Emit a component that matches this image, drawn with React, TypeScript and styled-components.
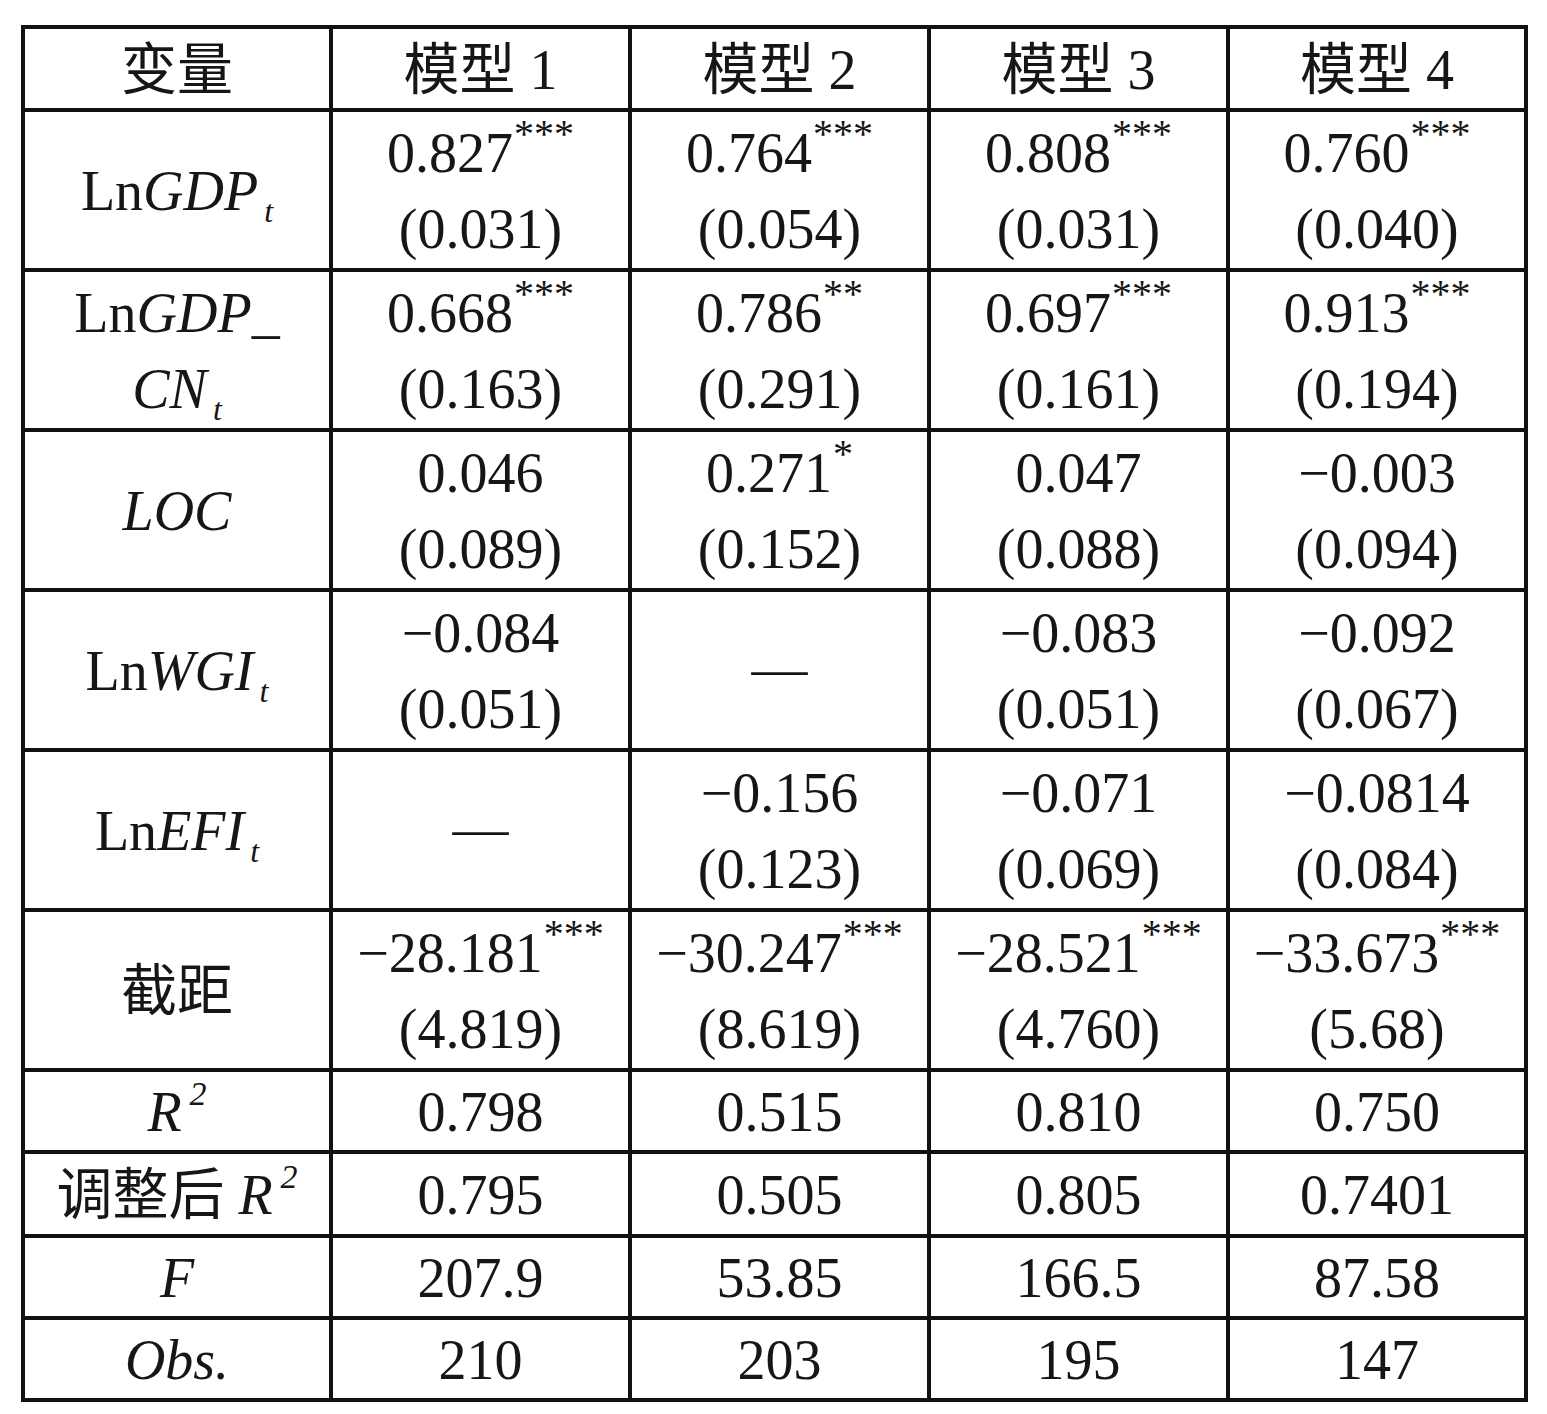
import React from 'react';
import styled, { createGlobalStyle } from 'styled-components';

const Global = createGlobalStyle`
    html, body {
        margin: 0;
        padding: 0;
        background: #ffffff;
    }
`;

const Page = styled.div`
    padding: 25px 0 0 21px;
    font-family: "Liberation Serif", "Noto Sans CJK SC", serif;
    color: #161616;
`;

const Table = styled.table`
    border-collapse: collapse;
    table-layout: fixed;
    width: 1507px;
    font-size: 56px;
    line-height: 76px;
`;

const Row = styled.tr<{ $h: number }>`
    height: ${props => props.$h}px;
`;

const Cell = styled.td`
    border: 4px solid #111111;
    padding: 2px 0 0 0;
    text-align: center;
    vertical-align: middle;
    white-space: nowrap;
`;

const Line = styled.div`
    display: block;
`;

const Cjk = styled.span`
    font-family: "Noto Sans CJK SC", sans-serif;
    font-weight: 400;
    line-height: 1;
`;

const It = styled.i`
    font-style: italic;
`;

const Stars = styled.span`
    font-size: 40px;
    line-height: 0;
    vertical-align: 25px;
    margin-left: 1px;
`;

const Sub = styled.i`
    font-size: 32px;
    line-height: 0;
    vertical-align: -12px;
    margin-left: 6px;
`;

const Sup = styled.i`
    font-size: 34px;
    line-height: 0;
    vertical-align: 26px;
    margin-left: 8px;
`;

const Dash = styled.span`
    vertical-align: 6px;
`;

type Val = { v: string; s?: string; e?: string };
type Entry = Val | null;

interface DataRow {
    label: React.ReactNode;
    cells: Entry[];
    h: number;
}

const tall = 160;
const short = 82;

const rows: DataRow[] = [
    {
        label: <Line>Ln<It>GDP</It><Sub>t</Sub></Line>,
        h: tall,
        cells: [
            { v: '0.827', s: '***', e: '(0.031)' },
            { v: '0.764', s: '***', e: '(0.054)' },
            { v: '0.808', s: '***', e: '(0.031)' },
            { v: '0.760', s: '***', e: '(0.040)' },
        ],
    },
    {
        label: (
            <>
                <Line>Ln<It>GDP</It>_</Line>
                <Line><It>CN</It><Sub>t</Sub></Line>
            </>
        ),
        h: tall,
        cells: [
            { v: '0.668', s: '***', e: '(0.163)' },
            { v: '0.786', s: '**', e: '(0.291)' },
            { v: '0.697', s: '***', e: '(0.161)' },
            { v: '0.913', s: '***', e: '(0.194)' },
        ],
    },
    {
        label: <Line><It>LOC</It></Line>,
        h: tall,
        cells: [
            { v: '0.046', e: '(0.089)' },
            { v: '0.271', s: '*', e: '(0.152)' },
            { v: '0.047', e: '(0.088)' },
            { v: '\u22120.003', e: '(0.094)' },
        ],
    },
    {
        label: <Line>Ln<It>WGI</It><Sub>t</Sub></Line>,
        h: tall,
        cells: [
            { v: '\u22120.084', e: '(0.051)' },
            null,
            { v: '\u22120.083', e: '(0.051)' },
            { v: '\u22120.092', e: '(0.067)' },
        ],
    },
    {
        label: <Line>Ln<It>EFI</It><Sub>t</Sub></Line>,
        h: tall,
        cells: [
            null,
            { v: '\u22120.156', e: '(0.123)' },
            { v: '\u22120.071', e: '(0.069)' },
            { v: '\u22120.0814', e: '(0.084)' },
        ],
    },
    {
        label: <Line><Cjk>截距</Cjk></Line>,
        h: tall,
        cells: [
            { v: '\u221228.181', s: '***', e: '(4.819)' },
            { v: '\u221230.247', s: '***', e: '(8.619)' },
            { v: '\u221228.521', s: '***', e: '(4.760)' },
            { v: '\u221233.673', s: '***', e: '(5.68)' },
        ],
    },
    {
        label: <Line><It>R</It><Sup>2</Sup></Line>,
        h: short,
        cells: [{ v: '0.798' }, { v: '0.515' }, { v: '0.810' }, { v: '0.750' }],
    },
    {
        label: <Line><Cjk>调整后</Cjk> <It>R</It><Sup>2</Sup></Line>,
        h: 84,
        cells: [{ v: '0.795' }, { v: '0.505' }, { v: '0.805' }, { v: '0.7401' }],
    },
    {
        label: <Line><It>F</It></Line>,
        h: short,
        cells: [{ v: '207.9' }, { v: '53.85' }, { v: '166.5' }, { v: '87.58' }],
    },
    {
        label: <Line><It>Obs.</It></Line>,
        h: short,
        cells: [{ v: '210' }, { v: '203' }, { v: '195' }, { v: '147' }],
    },
];

const ValueCell: React.FC<{ entry: Entry }> = ({ entry }) => {
    if (!entry) {
        return <Cell><Line><Dash>—</Dash></Line></Cell>;
    }
    return (
        <Cell>
            <Line>{entry.v}{entry.s && <Stars>{entry.s}</Stars>}</Line>
            {entry.e && <Line>{entry.e}</Line>}
        </Cell>
    );
};

const App: React.FC = () => {
    return (
        <Page>
            <Global />
            <Table>
                <colgroup>
                    <col style={{ width: 308 }} />
                    <col style={{ width: 299 }} />
                    <col style={{ width: 299 }} />
                    <col style={{ width: 299 }} />
                    <col style={{ width: 298 }} />
                </colgroup>
                <tbody>
                    <Row $h={83}>
                        <Cell><Line><Cjk>变量</Cjk></Line></Cell>
                        {[1, 2, 3, 4].map(n => (
                            <Cell key={n}><Line><Cjk>模型</Cjk> {n}</Line></Cell>
                        ))}
                    </Row>
                    {rows.map((row, i) => (
                        <Row $h={row.h} key={i}>
                            <Cell>{row.label}</Cell>
                            {row.cells.map((c, j) => (
                                <ValueCell entry={c} key={j} />
                            ))}
                        </Row>
                    ))}
                </tbody>
            </Table>
        </Page>
    );
};

export default App;
